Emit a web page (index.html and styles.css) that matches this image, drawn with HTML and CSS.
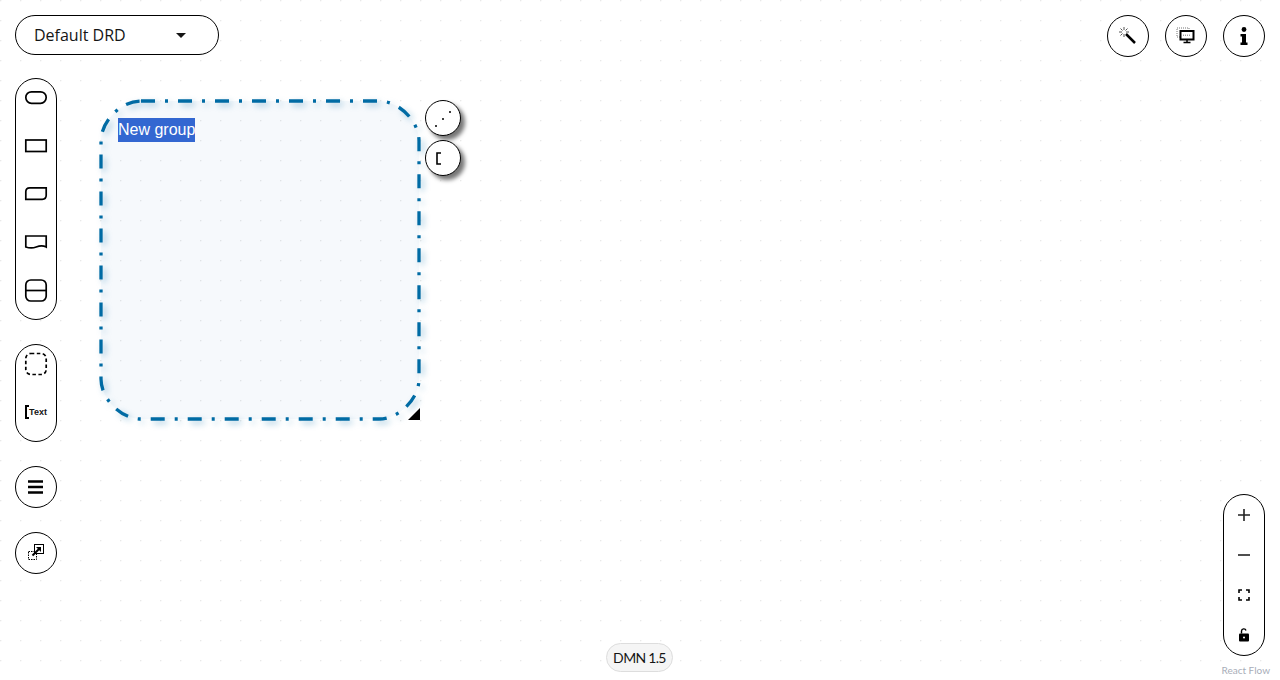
FILE: index.html
```html
<!doctype html>
<html lang="en">
<head>
    <meta charset="utf-8">
    <title>DMN Editor</title>
    <link rel="stylesheet" href="styles.css">
</head>
<body>
    <div class="canvas">
        <!-- dotted background -->
        <svg class="dots" width="1280" height="680">
            <defs>
                <pattern id="dot" width="20" height="20" patternUnits="userSpaceOnUse">
                    <circle cx="0.7" cy="0.7" r="0.75" fill="#e8e8e8"></circle>
                </pattern>
            </defs>
            <rect width="1280" height="680" fill="url(#dot)"></rect>
        </svg>

        <!-- selected group node -->
        <svg class="group-node" width="340" height="340" viewBox="0 0 340 340">
            <path class="group-fill" d="M45 5H283C303 5 323 25 323 45V283C323 303 303 323 283 323H45C25 323 5 303 5 283V45C5 25 25 5 45 5Z"></path>
            <path class="group-stroke" d="M45 5H283C303 5 323 25 323 45V283C323 303 303 323 283 323H45C25 323 5 303 5 283V45C5 25 25 5 45 5Z"></path>
            <path d="M324 312v12h-12z" fill="#000"></path>
        </svg>
        <span class="group-label">New group</span>

        <div class="node-handles">
            <button class="handle">
                <svg width="34" height="34"><g fill="#000"><circle cx="10" cy="25" r="1"></circle><circle cx="17" cy="18" r="1"></circle><circle cx="24" cy="11" r="1"></circle></g></svg>
            </button>
            <button class="handle">
                <svg width="34" height="34"><path d="M15 12h-4v11h4" fill="none" stroke="#000" stroke-width="1.600"></path></svg>
            </button>
        </div>

        <div class="drd-select">
            <span>Default DRD</span>
            <i class="caret"></i>
        </div>

        <div class="palette">
            <div class="pill">
                <div class="pill-item"><svg width="26" height="18"><rect x="2.800" y="2.800" width="20.400" height="11.500" rx="5.700" class="shape"></rect></svg></div>
                <div class="pill-item"><svg width="26" height="18"><rect x="2.800" y="3" width="20.400" height="11.500" class="shape"></rect></svg></div>
                <div class="pill-item"><svg width="26" height="18"><path d="M6.800 2.800h16.400v7.500q0 4-4 4h-16.400v-7.500q0-4 4-4z" class="shape"></path></svg></div>
                <div class="pill-item"><svg width="26" height="18"><path d="M2.800 3h20.400v11c-3-1.500-6-1.500-10 0s-7.400 1-10.400 0z" class="shape"></path></svg></div>
                <div class="pill-item"><svg width="26" height="26"><rect x="2.800" y="3" width="20.400" height="21" rx="5" class="shape"></rect><path d="M2.800 13.500h20.400" class="shape"></path></svg></div>
            </div>
            <div class="pill">
                <div class="pill-item"><svg width="26" height="26"><rect x="2.800" y="2.500" width="20.400" height="21" rx="5" class="shape dashed"></rect></svg></div>
                <div class="pill-item text-item"><i class="bracket"></i><span>Text</span></div>
            </div>
            <button class="round-btn">
                <svg width="16" height="14"><path d="M0 1.500h15M0 7h15M0 12.500h15" stroke="#000" stroke-width="2.500"></path></svg>
            </button>
            <button class="round-btn">
                <svg width="18" height="18">
                    <rect x="1.500" y="7.500" width="8" height="8" fill="none" stroke="#000" stroke-dasharray="1.500 1"></rect>
                    <rect x="7.500" y="0.500" width="9" height="9" fill="#fff" stroke="#000"></rect>
                    <path d="M5.500 11.500l7-7" stroke="#000" stroke-width="2"></path>
                    <path d="M9 3h5v5z" fill="#000"></path>
                </svg>
            </button>
        </div>

        <div class="top-actions">
            <button class="round-btn">
                <svg width="20" height="20">
                    <path d="M8 8l9 9" stroke="#000" stroke-width="2.500"></path>
                    <path d="M6 1v3M6 8v3M1 6h3M8 6h3M2.500 2.500l2 2M9.500 2.500l-2 2M2.500 9.500l2-2" stroke="#555" stroke-width="1"></path>
                </svg>
            </button>
            <button class="round-btn">
                <svg width="20" height="18">
                    <rect x="1" y="1" width="12" height="9" fill="none" stroke="#777" stroke-dasharray="1 1"></rect>
                    <rect x="4.500" y="4" width="13" height="8.500" fill="#fff" stroke="#000" stroke-width="2"></rect>
                    <path d="M7 8.200h8" stroke="#777" stroke-dasharray="1 1"></path>
                    <path d="M11 12.500v2.500M7.500 15.500h7" stroke="#000" stroke-width="1.500"></path>
                </svg>
            </button>
            <button class="round-btn">
                <svg width="10" height="18"><circle cx="5" cy="2.500" r="2.400" fill="#000"></circle><path d="M1.500 7h5.500v8.500h1.500v2.500h-7v-2.500h1.500v-6h-1.500z" fill="#000"></path></svg>
            </button>
        </div>

        <div class="zoom-controls">
            <div class="zoom-item"><svg width="14" height="14"><path d="M7 1v12M1 7h12" stroke="#222" stroke-width="1.600"></path></svg></div>
            <div class="zoom-item"><svg width="14" height="14"><path d="M1 7h12" stroke="#222" stroke-width="1.600"></path></svg></div>
            <div class="zoom-item"><svg width="12" height="12"><path d="M1 4v-3h3M8 1h3v3M11 8v3h-3M4 11h-3v-3" fill="none" stroke="#000" stroke-width="1.600"></path></svg></div>
            <div class="zoom-item"><svg width="12" height="14"><path d="M3.500 5.500v-2.500a2.300 2.300 0 0 1 4.500-.5" fill="none" stroke="#000" stroke-width="1.400"></path><rect x="1" y="5.500" width="10" height="8" rx="1" fill="#000"></rect><circle cx="6" cy="9.500" r="1" fill="#fff"></circle></svg></div>
        </div>

        <div class="dmn-version">DMN 1.5</div>
        <div class="attribution">React Flow</div>
    </div>
</body>
</html>
```

FILE: styles.css
```css
html, body {
    height: 100%;
}
body {
    margin: 0;
    background: #fff;
    overflow: hidden;
    font-family: "Open Sans", "Liberation Sans", sans-serif;
    color: #151515;
}
button {
    padding: 0;
    font: inherit;
}
.canvas {
    position: relative;
    width: 1280px;
    height: 680px;
    overflow: hidden;
}
.dots {
    position: absolute;
    left: 0;
    top: 0;
}

/* group node */
.group-node {
    position: absolute;
    left: 96px;
    top: 96px;
    overflow: visible;
}
.group-fill {
    fill: rgba(35, 115, 195, 0.045);
}
.group-stroke {
    fill: none;
    stroke: #006ba4;
    stroke-width: 3.300;
    stroke-dasharray: 14 10 3 10;
    filter: drop-shadow(3px 3px 3px rgba(0, 107, 164, 0.35));
}
.group-label {
    position: absolute;
    left: 118px;
    top: 118px;
    font: 16px/24px "Liberation Sans", Arial, sans-serif;
    color: #fff;
    background: #3367d1;
}
.node-handles {
    position: absolute;
    left: 425px;
    top: 100px;
    display: flex;
    flex-direction: column;
    gap: 4px;
}
.handle {
    display: flex;
    width: 36px;
    height: 36px;
    background: #fff;
    border: 1px solid #000;
    border-radius: 50%;
    box-shadow: 4px 4px 4px #777;
}

/* panels */
.drd-select {
    position: absolute;
    left: 15px;
    top: 15px;
    box-sizing: border-box;
    width: 204px;
    height: 40px;
    padding: 0 32px 0 18px;
    display: flex;
    align-items: center;
    justify-content: space-between;
    font-size: 16px;
    background: #fff;
    border: 1px solid #000;
    border-radius: 20px;
}
.caret {
    border-top: 5px solid #151515;
    border-left: 5px solid transparent;
    border-right: 5px solid transparent;
}
.palette {
    position: absolute;
    left: 15px;
    top: 78px;
    display: flex;
    flex-direction: column;
    gap: 24px;
}
.pill {
    width: 40px;
    background: #fff;
    border: 1px solid #000;
    border-radius: 21px;
}
.pill-item {
    display: flex;
    align-items: center;
    justify-content: center;
    box-sizing: border-box;
    height: 48px;
    padding-bottom: 10px;
}
.shape {
    fill: #fff;
    stroke: #000;
    stroke-width: 1.700;
}
.dashed {
    stroke-dasharray: 3.500 2.500;
}
.text-item {
    font: 700 9px/1 "Liberation Sans", sans-serif;
}
.bracket {
    width: 2px;
    height: 10px;
    border: 2px solid #000;
    border-right: 0;
}
.round-btn {
    display: flex;
    align-items: center;
    justify-content: center;
    width: 42px;
    height: 42px;
    background: #fff;
    border: 1px solid #000;
    border-radius: 50%;
}
.top-actions {
    position: absolute;
    right: 15px;
    top: 15px;
    display: flex;
    gap: 16px;
}
.zoom-controls {
    position: absolute;
    right: 15px;
    bottom: 24px;
    width: 40px;
    background: #fff;
    border: 1px solid #000;
    border-radius: 21px;
}
.zoom-item {
    display: flex;
    align-items: center;
    justify-content: center;
    height: 40px;
}
.dmn-version {
    position: absolute;
    left: 606px;
    top: 643px;
    box-sizing: border-box;
    width: 67px;
    height: 29px;
    line-height: 27px;
    text-align: center;
    font-family: Lato, sans-serif;
    font-size: 14px;
    letter-spacing: -0.6px;
    word-spacing: -0.5px;
    background: #f5f5f5;
    border: 1px solid #ddd;
    border-radius: 15px;
}
.attribution {
    position: absolute;
    right: 10px;
    bottom: 4px;
    font-family: Lato, sans-serif;
    font-size: 10px;
    color: #a8adb8;
}
```
